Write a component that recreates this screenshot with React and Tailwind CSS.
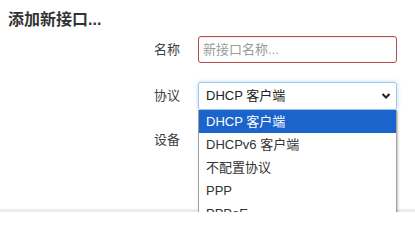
import React from "react";

const font = { fontFamily: '"Liberation Sans", "Noto Sans CJK SC", sans-serif' };

export default function App() {
  const options = ["DHCP 客户端", "DHCPv6 客户端", "不配置协议", "PPP", "PPPoE"];
  return (
    <div
      className="relative w-[415px] h-[212px] overflow-hidden bg-white flex flex-col text-[#404040]"
      style={font}
    >
      <div className="flex-1 flex flex-col">
        <h3 className="pl-2 pt-[10px] text-[16px] leading-[20px] font-bold text-[#333]">添加新接口...</h3>
        <div className="flex items-center mt-[6px] h-[27px]">
          <label className="w-[180px] text-right text-[13px]">名称</label>
          <input
            className="ml-[18px] w-[199px] h-[27px] rounded-[3px] border border-[#b94a48] px-[4px] text-[13px] text-[#333] placeholder:text-[#9a9a9a] shadow-[inset_0_1px_1px_rgba(0,0,0,0.075)] outline-none"
            placeholder="新接口名称..."
            style={font}
          />
        </div>
        <div className="flex items-center mt-[19px] h-[28px]">
          <label className="w-[180px] text-right text-[13px]">协议</label>
          <div className="ml-[18px] w-[199px] h-[28px] rounded-[3px] border border-[#9ecaed] shadow-[0_0_4px_rgba(102,175,233,0.5)] bg-white flex items-center justify-between pl-[7px] pr-[5px] text-[13px] text-[#222]">
            <span>DHCP 客户端</span>
            <svg width="10" height="8" viewBox="0 0 10 8">
              <path d="M1.5 2 L5 5.5 L8.5 2" fill="none" stroke="#222" strokeWidth="2" />
            </svg>
          </div>
        </div>
        <div className="flex items-center mt-[16px] h-[28px]">
          <label className="w-[180px] text-right text-[13px]">设备</label>
        </div>
      </div>
      <div className="h-[3px] bg-[#ececec]" />
      <div className="absolute left-[198px] top-[110px] w-[199px] bg-white border-x border-[#a0a0a0] shadow-[1px_1px_2px_rgba(0,0,0,0.25)]">
        {options.map((o, i) => (
          <div
            key={o}
            className={
              "h-[23px] flex items-center pl-[7px] text-[13px] " +
              (i === 0 ? "bg-[#1a64cc] text-white" : "text-[#333]")
            }
          >
            {o}
          </div>
        ))}
      </div>
    </div>
  );
}
